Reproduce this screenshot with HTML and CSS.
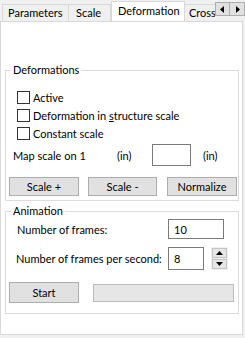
FILE: index.html
```html
<!DOCTYPE html>
<html lang="en">
<head>
    <meta charset="UTF-8">
    <title>Deformation</title>
    <link rel="stylesheet" href="styles.css">
</head>
<body>
    <div class="window">
        <div class="tabbar">
            <div class="tabs">
                <div class="tab tab-params">Parameters</div>
                <div class="tab tab-scale">Scale</div>
                <div class="tab tab-active">Deformation</div>
                <div class="tab tab-cross">Cross section</div>
            </div>
            <div class="scroller">
                <span class="arrow"><svg width="5" height="7" viewBox="0 0 5 7"><path d="M4 0 L0 3.5 L4 7 Z" fill="#000"/></svg></span>
                <span class="arrow"><svg width="5" height="7" viewBox="0 0 5 7"><path d="M1 0 L5 3.5 L1 7 Z" fill="#000"/></svg></span>
            </div>
        </div>

        <div class="panel">
            <fieldset class="group group-def">
                <legend>Deformations</legend>
                <label class="check"><span class="box"></span><span>Active</span></label>
                <label class="check"><span class="box"></span><span>Deformation in <u>s</u>tructure scale</span></label>
                <label class="check"><span class="box"></span><span>Constant scale</span></label>
                <div class="map-row">
                    <span class="map-label">Map scale on 1</span>
                    <span class="unit">(in)</span>
                    <span class="field"></span>
                    <span class="unit">(in)</span>
                </div>
                <div class="btn-row">
                    <button class="btn">Scale +</button>
                    <button class="btn">Scale -</button>
                    <button class="btn">Normalize</button>
                </div>
            </fieldset>

            <fieldset class="group group-anim">
                <legend>Animation</legend>
                <div class="row row-frames">
                    <span class="row-label">Number of frames:</span>
                    <span class="field field-wide">10</span>
                </div>
                <div class="row row-fps">
                    <span class="row-label">Number of frames per second:</span>
                    <span class="field field-small">8</span>
                    <span class="spin">
                        <span class="spin-btn"><svg width="7" height="4" viewBox="0 0 7 4"><path d="M3.5 0 L7 4 L0 4 Z" fill="#000"/></svg></span>
                        <span class="spin-btn"><svg width="7" height="4" viewBox="0 0 7 4"><path d="M0 0 L7 0 L3.5 4 Z" fill="#000"/></svg></span>
                    </span>
                </div>
                <div class="start-row">
                    <button class="btn btn-start">Start</button>
                    <div class="progress"></div>
                </div>
            </fieldset>
        </div>
    </div>
</body>
</html>
```

FILE: styles.css
```css
body {
    margin: 0;
    background: #f0f0f0;
    font-family: 'Lato', 'Liberation Sans', sans-serif;
    font-size: 11px;
    color: #000;
}

.window {
    width: 245px;
    height: 338px;
}

/* tab strip */
.tabbar {
    display: flex;
    height: 21px;
}

.tabs {
    display: flex;
    align-items: flex-end;
    width: 215px;
    overflow: hidden;
    padding-left: 2px;
    box-sizing: border-box;
}

.tab {
    flex: none;
    box-sizing: border-box;
    height: 17px;
    line-height: 16px;
    border: 1px solid #d9d9d9;
    border-bottom: none;
    background: #f0f0f0;
    padding-left: 5px;
    white-space: nowrap;
    overflow: hidden;
}

.tab-params {
    width: 67px;
}

.tab-scale {
    width: 42px;
    border-left: none;
    padding-left: 7px;
}

.tab-active {
    width: 74px;
    height: 21px;
    margin-bottom: -1px;
    background: #fff;
    position: relative;
    z-index: 1;
    padding-left: 6px;
    line-height: 18px;
}

.tab-cross {
    width: 32px;
    border-left: none;
    border-right: none;
    padding-left: 4px;
}

.scroller {
    display: flex;
    padding-top: 2px;
}

.arrow {
    box-sizing: border-box;
    width: 15px;
    height: 14px;
    border: 1px solid #adadad;
    background: #e1e1e1;
    display: flex;
    align-items: center;
    justify-content: center;
}

.arrow + .arrow {
    border-left: none;
}

/* page */
.panel {
    box-sizing: border-box;
    width: 243px;
    height: 314px;
    border: 1px solid #d9d9d9;
    background: #fff;
    padding-top: 41px;
}

.group {
    box-sizing: border-box;
    width: 234px;
    margin: 0 0 0 4px;
    padding: 0;
    border: 1px solid #dcdcdc;
    min-width: 0;
}

.group legend {
    margin-left: 5px;
    padding: 0 2px;
    line-height: 14px;
}

.group-def {
    height: 138px;
    padding-top: 11px;
}

.group-anim {
    height: 110px;
    margin-top: 3px;
    padding-top: 1px;
}

.check {
    display: flex;
    align-items: center;
    height: 18px;
    margin-left: 11px;
}

.box {
    box-sizing: border-box;
    width: 13px;
    height: 13px;
    border: 1px solid #333;
    background: #fff;
    margin-right: 3px;
}

.map-row {
    display: flex;
    align-items: center;
    height: 22px;
    margin-top: 2px;
    margin-left: 7px;
}

.map-label {
    width: 104px;
}

.unit {
    width: 35px;
}

.field {
    box-sizing: border-box;
    height: 22px;
    width: 39px;
    margin-right: 12px;
    border: 1px solid #7a7a7a;
    background: #fff;
    padding-left: 5px;
    display: flex;
    align-items: center;
}

.btn-row {
    display: flex;
    gap: 9px;
    margin: 11px 0 0 3px;
}

.btn {
    box-sizing: border-box;
    width: 70px;
    height: 19px;
    border: 1px solid #adadad;
    background: #e1e1e1;
    font: inherit;
    padding: 0;
}

.btn-row .btn:nth-child(2) {
    width: 69px;
}

.btn-row .btn:nth-child(3) {
    margin-left: 1px;
}

.row {
    display: flex;
    align-items: center;
    margin-left: 11px;
}

.row-label {
    width: 151px;
    white-space: nowrap;
}

.row-frames {
    height: 20px;
}

.row-frames .field {
    height: 20px;
}

.field-wide {
    width: 56px;
}

.row-fps {
    height: 23px;
    margin-top: 8px;
    margin-left: 10px;
}

.row-fps .row-label {
    width: 152px;
}

.field-small {
    width: 36px;
    height: 23px;
    margin-right: 7px;
}

.spin {
    display: flex;
    flex-direction: column;
    gap: 1px;
    background: #f0f0f0;
    padding: 1px;
}

.spin-btn {
    box-sizing: border-box;
    width: 15px;
    height: 10px;
    border: 1px solid #c4c4c4;
    background: #e6e6e6;
    display: flex;
    align-items: center;
    justify-content: center;
}

.start-row {
    display: flex;
    align-items: center;
    margin: 12px 0 0 3px;
}

.btn-start {
    height: 21px;
}

.progress {
    box-sizing: border-box;
    width: 141px;
    height: 18px;
    margin-left: 14px;
    border: 1px solid #bcbcbc;
    background: #e6e6e6;
}
```
